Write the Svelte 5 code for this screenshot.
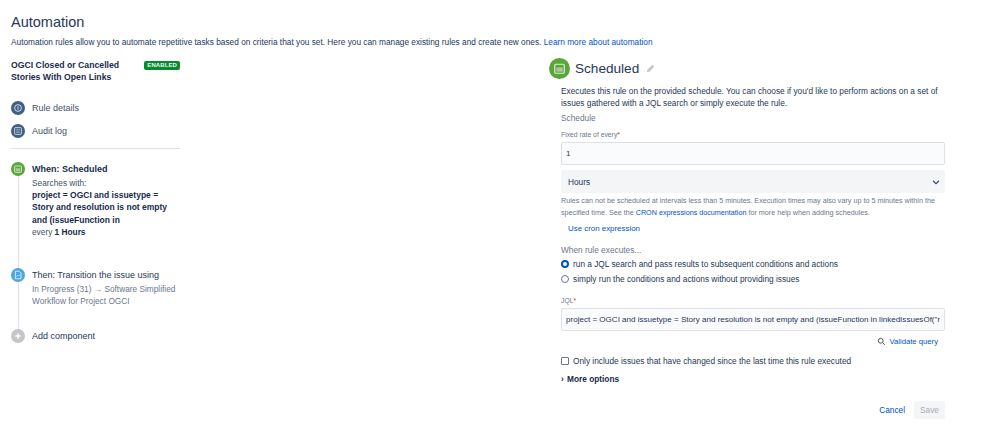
<script>
	// Rule summary shown in the left column
	let rate = '1';
	let jql = 'project = OGCI and issuetype = Story and resolution is not empty and (issueFunction in linkedIssuesOf("r';
</script>

<div class="page">
	<h1>Automation</h1>
	<p class="intro">Automation rules allow you to automate repetitive tasks based on criteria that you set. Here you can manage existing rules and create new ones. <a href="#top">Learn more about automation</a></p>

	<div class="columns">
		<aside class="rail">
			<div class="rule-head">
				<strong>OGCI Closed or Cancelled Stories With Open Links</strong>
				<span class="badge">ENABLED</span>
			</div>

			<div class="nav-item">
				<span class="dot navy">
					<svg viewBox="0 0 16 16"><circle cx="8" cy="8" r="4.5" fill="none" stroke="#fff" stroke-opacity=".8" stroke-width="1.3"/><rect x="7.4" y="5.6" width="1.2" height="4.8" fill="#fff" fill-opacity=".8"/></svg>
				</span>
				Rule details
			</div>
			<div class="nav-item">
				<span class="dot navy">
					<svg viewBox="0 0 16 16"><rect x="3.5" y="3.5" width="9" height="9" rx="1" fill="none" stroke="#fff" stroke-opacity=".8" stroke-width="1.2"/><path d="M5.5 6.5h5M5.5 9.5h5" stroke="#fff" stroke-opacity=".8"/></svg>
				</span>
				Audit log
			</div>
			<hr />

			<div class="steps">
				<div class="step when">
					<span class="dot green">
						<svg viewBox="0 0 16 16"><rect x="3.5" y="4" width="9" height="8.5" rx="1" fill="none" stroke="#fff" stroke-opacity=".8" stroke-width="1.2"/><rect x="5" y="7" width="6" height="4" fill="#fff" fill-opacity=".45"/></svg>
					</span>
					<div class="step-body">
						<div class="step-title bold">When: Scheduled</div>
						<div class="muted first">Searches with:</div>
						<div class="query">project = OGCI and issuetype = Story and resolution is not empty and (issueFunction in</div>
						<div class="muted">every <b>1 Hours</b></div>
					</div>
				</div>
				<div class="step then">
					<span class="dot blue">
						<svg viewBox="0 0 16 16"><path d="M4.5 3h5l2.5 2.5V13h-7.500z" fill="none" stroke="#fff" stroke-opacity=".85" stroke-width="1.2"/><path d="M6 10l1.500-1.500 1 1L10.500 7.500" fill="none" stroke="#fff" stroke-opacity=".85"/></svg>
					</span>
					<div class="step-body">
						<div class="step-title">Then: Transition the issue using</div>
						<div class="grey">In Progress (31) → Software Simplified Workflow for Project OGCI</div>
					</div>
				</div>
				<div class="step add">
					<span class="dot silver">
						<svg viewBox="0 0 16 16"><path d="M8 4.500v7M4.500 8h7" stroke="#fff" stroke-width="1.8"/></svg>
					</span>
					<div class="step-body">
						<div class="step-title">Add component</div>
					</div>
				</div>
			</div>
		</aside>

		<section class="editor">
			<div class="editor-head">
				<span class="dot green large">
					<svg viewBox="0 0 16 16"><rect x="3.5" y="4" width="9" height="8.5" rx="1" fill="none" stroke="#fff" stroke-opacity=".8" stroke-width="1.1"/><rect x="5" y="7" width="6" height="4" fill="#fff" fill-opacity=".45"/></svg>
				</span>
				<h2>Scheduled</h2>
				<svg class="pencil" viewBox="0 0 12 12"><path d="M1 11l.8-3.300L8.500 1l2.500 2.500-6.700 6.700z" fill="#c1c7d0"/></svg>
			</div>

			<div class="form">
				<p class="lead">Executes this rule on the provided schedule. You can choose if you'd like to perform actions on a set of issues gathered with a JQL search or simply execute the rule.</p>
				<div class="group-label">Schedule</div>

				<label class="field-label" for="rate">Fixed rate of every<span class="req">*</span></label>
				<input id="rate" class="text-input" bind:value={rate} />

				<div class="select">
					Hours
					<svg viewBox="0 0 12 12"><path d="M2.500 4.500L6 8l3.500-3.500" fill="none" stroke="#344563" stroke-width="1.3"/></svg>
				</div>

				<p class="help">Rules can not be scheduled at intervals less than 5 minutes. Execution times may also vary up to 5 minutes within the specified time. See the <a href="#top">CRON expressions documentation</a> for more help when adding schedules.</p>
				<a class="cron" href="#top">Use cron expression</a>

				<div class="group-label when-label">When rule executes...</div>
				<div class="choice first-choice"><span class="radio on"></span>run a JQL search and pass results to subsequent conditions and actions</div>
				<div class="choice"><span class="radio"></span>simply run the conditions and actions without providing issues</div>

				<label class="field-label jql-label" for="jql">JQL<span class="req">*</span></label>
				<input id="jql" class="text-input" bind:value={jql} />

				<div class="validate">
					<svg viewBox="0 0 12 12"><circle cx="5" cy="5" r="3.2" fill="none" stroke="#42526e" stroke-width="1.3"/><path d="M7.500 7.500L10.500 10.500" stroke="#42526e" stroke-width="1.3"/></svg>
					<a href="#top">Validate query</a>
				</div>

				<div class="choice check"><span class="box"></span>Only include issues that have changed since the last time this rule executed</div>

				<div class="more"><span class="caret">›</span>More options</div>

				<div class="actions">
					<a href="#top">Cancel</a>
					<button disabled>Save</button>
				</div>
			</div>
		</section>
	</div>
</div>

<style>
	:global(body) {
		margin: 0;
		background: #fff;
	}

	.page {
		box-sizing: border-box;
		width: 999px;
		height: 433px;
		padding: 13px 0 0 11px;
		overflow: hidden;
		font-family: "Liberation Sans", Arial, sans-serif;
		font-size: 8.3px;
		color: #172b4d;
	}

	h1 {
		margin: 0;
		font-size: 14.5px;
		line-height: 18px;
		font-weight: 400;
		color: #253858;
	}

	a {
		color: #0052cc;
		text-decoration: none;
	}

	.intro {
		margin: 5px 0 0;
		line-height: 12px;
		color: #253858;
	}

	.columns {
		display: flex;
		margin-top: 10px;
	}

	.rail {
		flex: none;
		width: 169px;
		margin-right: 369px;
	}

	.rule-head {
		display: flex;
		justify-content: space-between;
		align-items: flex-start;
		box-sizing: border-box;
		height: 38.5px;
		padding-top: 1px;
		font-size: 8.7px;
		line-height: 12px;
		color: #172b4d;
	}

	.rule-head strong {
		width: 125px;
	}

	.badge {
		margin-top: 2px;
		padding: 0 3px;
		height: 9px;
		line-height: 9px;
		font-size: 6px;
		font-weight: 700;
		letter-spacing: .1px;
		color: #e3fcef;
		background: #0a8a2e;
		border-radius: 2px;
	}

	.dot {
		flex: none;
		display: flex;
		align-items: center;
		justify-content: center;
		width: 14px;
		height: 14px;
		border-radius: 50%;
	}

	.dot svg {
		width: 12px;
		height: 12px;
	}

	.navy { background: #3f5f85; }
	.green { background: #5aa63b; }
	.blue { background: #4ba6e8; }
	.silver { background: #c4c6c9; }

	.nav-item {
		display: flex;
		align-items: center;
		gap: 7px;
		height: 23px;
		font-size: 9px;
		color: #42526e;
	}

	hr {
		margin: 5.5px 0 0;
		border: 0;
		border-top: 1px solid #dfe1e6;
	}

	.steps {
		position: relative;
		margin-top: 13px;
	}

	.steps::before {
		content: "";
		position: absolute;
		left: 7px;
		top: 10px;
		height: 158px;
		width: 1px;
		background: #dfe1e6;
	}

	.step {
		position: relative;
		display: flex;
		gap: 7px;
	}

	.step-title {
		font-size: 9px;
		line-height: 14px;
		color: #253858;
	}

	.step-title.bold {
		font-weight: 700;
		color: #172b4d;
	}

	.step-body {
		width: 145px;
	}

	.muted {
		color: #42526e;
		line-height: 12px;
	}

	.muted.first {
		margin-top: 1px;
	}

	.muted b {
		color: #172b4d;
	}

	.query {
		font-size: 8.5px;
		font-weight: 700;
		line-height: 12.3px;
		color: #172b4d;
	}

	.when {
		height: 106px;
	}

	.then {
		height: 61px;
	}

	.grey {
		margin-top: 1px;
		line-height: 12px;
		color: #6b778c;
	}

	.editor {
		flex: none;
		width: 396px;
	}

	.editor-head {
		display: flex;
		align-items: center;
		height: 21px;
		margin-bottom: 6px;
	}

	.large {
		width: 21px;
		height: 21px;
	}

	.large svg {
		width: 17px;
		height: 17px;
	}

	h2 {
		margin: 0 0 0 5px;
		font-size: 13.6px;
		font-weight: 400;
		color: #253858;
	}

	.pencil {
		width: 9px;
		height: 9px;
		margin-left: 7px;
	}

	.form {
		display: flex;
		flex-direction: column;
		margin-left: 12px;
	}

	.lead {
		margin: 0;
		line-height: 12px;
		color: #253858;
	}

	.group-label {
		margin-top: 3px;
		line-height: 12px;
		color: #6b778c;
	}

	.field-label {
		margin-top: 6px;
		font-size: 6.8px;
		line-height: 10px;
		color: #6b778c;
	}

	.req {
		color: #de350b;
	}

	.text-input {
		box-sizing: border-box;
		width: 384px;
		height: 23px;
		margin-top: 2px;
		padding: 0 4px;
		border: 1px solid #dfe1e6;
		border-radius: 2px;
		background: #fafbfc;
		font: inherit;
		font-size: 8.05px;
		color: #253858;
		outline: none;
	}

	.select {
		display: flex;
		align-items: center;
		justify-content: space-between;
		box-sizing: border-box;
		width: 384px;
		height: 23px;
		margin-top: 5px;
		padding: 0 4px 0 7px;
		border-radius: 2px;
		background: #f4f5f7;
		color: #253858;
	}

	.select svg {
		width: 10px;
		height: 10px;
	}

	.help {
		margin: 2px 0 0;
		font-size: 7.2px;
		line-height: 12px;
		color: #6b778c;
	}

	.cron {
		margin: 4px 0 0 7px;
		font-size: 7.9px;
		line-height: 12px;
	}

	.when-label {
		margin-top: 9px;
	}

	.choice {
		display: flex;
		align-items: center;
		gap: 4px;
		height: 14.5px;
		color: #253858;
	}

	.first-choice {
		margin-top: 1px;
	}

	.radio {
		box-sizing: border-box;
		width: 8px;
		height: 8px;
		border: 1px solid #6b778c;
		border-radius: 50%;
		background: #fff;
	}

	.radio.on {
		border: 2.5px solid #0052cc;
		background: #fff;
	}

	.jql-label {
		margin-top: 10px;
	}

	.validate {
		display: flex;
		justify-content: flex-end;
		align-items: center;
		gap: 3px;
		height: 13px;
		margin-top: 3.5px;
		padding-right: 7px;
		font-size: 7.7px;
	}

	.validate svg {
		width: 9px;
		height: 9px;
	}

	.check {
		margin-top: 6px;
	}

	.box {
		box-sizing: border-box;
		width: 8px;
		height: 8px;
		border: 1px solid #6b778c;
		border-radius: 1px;
	}

	.more {
		margin-top: 3.5px;
		line-height: 14px;
		font-weight: 700;
		color: #172b4d;
	}

	.caret {
		display: inline-block;
		width: 6px;
	}

	.actions {
		display: flex;
		justify-content: flex-end;
		align-items: center;
		gap: 9px;
		margin-top: 15px;
	}

	button {
		width: 31px;
		height: 18px;
		padding: 0;
		border: 0;
		border-radius: 2px;
		background: #f4f5f7;
		font: inherit;
		color: #a5adba;
	}
</style>
